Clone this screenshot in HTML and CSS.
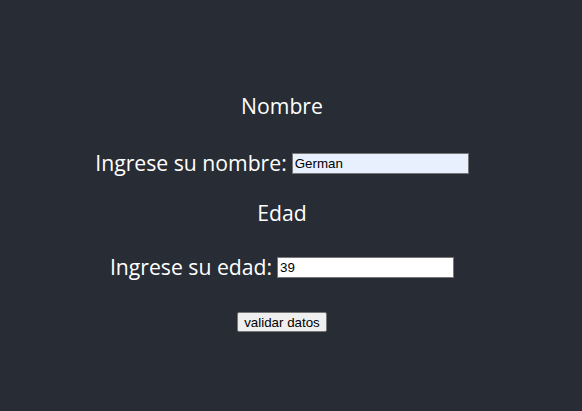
FILE: index.html
```html
<!DOCTYPE html>
<html>
<head>
<meta charset="utf-8">
<link rel="stylesheet" href="styles.css">
</head>
<body>
<div class="app">
  <form class="form">
    <div class="title t1">Nombre</div>
    <label class="row r1">Ingrese su nombre: <input class="field autofill" type="text" value="German"></label>
    <div class="title t2">Edad</div>
    <label class="row r2">Ingrese su edad: <input class="field" type="text" value="39"></label>
    <button class="btn" type="button">validar datos</button>
  </form>
</div>
</body>
</html>
```
FILE: styles.css
```css
html, body { margin: 0; padding: 0; }
.app {
  min-height: 100vh;
  box-sizing: border-box;
  padding: 13px 18px 0 0;
  background: #282c34;
  color: #fff;
  display: flex;
  flex-direction: column;
  align-items: center;
  justify-content: center;
  font-family: "Open Sans", "Noto Sans", sans-serif;
  font-size: 21.2px;
}
.form { display: flex; flex-direction: column; align-items: center; }
.title { line-height: 28px; }
.row { line-height: 28px; display: flex; align-items: center; }
.t1 { margin-bottom: 29px; }
.r1 { margin-bottom: 22px; }
.t2 { margin-bottom: 26px; }
.r2 { margin-bottom: 31px; }
.field {
  font-family: "Liberation Sans", Arial, sans-serif;
  font-size: 13.33px;
  width: 177px;
  height: 21px;
  box-sizing: border-box;
  padding: 1px 2px;
  border: 1px solid #767676;
  border-radius: 0;
  background: #fff;
  color: #000;
  margin-left: 5px;
}
.autofill { background: #e8f0fe; }
.btn {
  font-family: "Liberation Sans", Arial, sans-serif;
  font-size: 13.33px;
  padding: 1px 6px;
  height: 20px;
  background: #efefef;
  border: 1px solid #767676;
  border-radius: 2px;
  color: #000;
}
```
